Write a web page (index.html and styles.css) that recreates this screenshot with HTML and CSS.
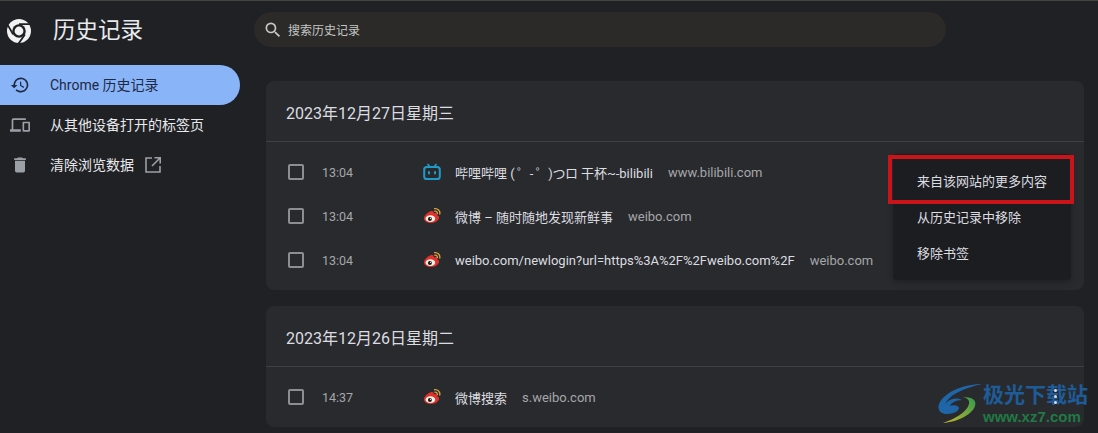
FILE: index.html
```html
<!DOCTYPE html>
<html lang="zh-CN">
<head>
    <meta charset="UTF-8">
    <meta name="viewport" content="width=device-width, initial-scale=1.0">
    <title>历史记录</title>
    <link rel="stylesheet" href="styles.css">
</head>
<body>
    <svg class="defs" width="0" height="0">
        <defs>
            <symbol id="weibo" viewBox="0 0 18 18">
                <path d="M1 11.4c0-3 4.2-6.6 7.2-7.4 2-.5 3 .6 2.5 2.4 2.4-.9 4-.3 3.4 1.8 1.2.5 2 1.2 2 2.4 0 2.6-3.6 5.4-8 5.4-4 0-7.1-1.9-7.1-4.6z" fill="#e0322b"/>
                <ellipse cx="7.4" cy="11.7" rx="4.8" ry="3.4" fill="#f6f1e8"/>
                <circle cx="6.9" cy="12" r="2" fill="#1d1310"/>
                <circle cx="7.5" cy="11.3" r=".6" fill="#f6f1e8"/>
                <path d="M11.6 1.6a4.6 4.6 0 0 1 5.2 5.4M11.8 4.2a2.2 2.2 0 0 1 2.6 2.5" fill="none" stroke="#d9a441" stroke-width="1.3" stroke-linecap="round"/>
            </symbol>
        </defs>
    </svg>

    <div class="app">
        <aside class="sidebar">
            <div class="brand">
                <svg class="brand-logo" width="26" height="26" viewBox="0 0 26 26">
                    <circle cx="13" cy="13" r="12" fill="#f1f1f1"/>
                    <circle cx="13" cy="13" r="6.8" fill="#202124"/>
                    <circle cx="13" cy="13" r="4.4" fill="#f1f1f1"/>
                    <path d="M13 6.2H24.6M7.1 16.4L1.4 6.4M18.9 16.4L12.6 25.6" stroke="#202124" stroke-width="1.8" fill="none"/>
                </svg>
                <span class="brand-title">历史记录</span>
            </div>
            <nav class="nav">
                <a class="nav-item active">
                    <svg class="nav-icon" width="20" height="20" viewBox="0 0 24 24"><path fill="#1d2a44" d="M13 3a9 9 0 0 0-9 9H1l3.9 3.9.1.1L9 12H6a7 7 0 1 1 2.05 4.95l-1.42 1.42A9 9 0 1 0 13 3zm-1 5v5l4.25 2.52.77-1.28-3.52-2.09V8H12z"/></svg>
                    <span>Chrome 历史记录</span>
                </a>
                <a class="nav-item">
                    <svg class="nav-icon" width="20" height="20" viewBox="0 0 24 24"><path fill="#9aa0a6" d="M4 6h15V4H4a2 2 0 0 0-2 2v11H0v3h13v-3H4V6zm19 2h-7a1 1 0 0 0-1 1v10a1 1 0 0 0 1 1h7a1 1 0 0 0 1-1V9a1 1 0 0 0-1-1zm-1 10h-5v-8h5v8z"/></svg>
                    <span>从其他设备打开的标签页</span>
                </a>
                <a class="nav-item">
                    <svg class="nav-icon" width="20" height="20" viewBox="0 0 24 24"><path fill="#9aa0a6" d="M6 19a2 2 0 0 0 2 2h8a2 2 0 0 0 2-2V7H6v12zM19 4h-3.5l-1-1h-5l-1 1H5v2h14V4z"/></svg>
                    <span>清除浏览数据</span>
                    <svg class="nav-external" width="18" height="18" viewBox="0 0 18 18"><path fill="none" stroke="#9aa0a6" stroke-width="1.6" d="M8 2H2v14h14v-6M10.5 1.8h5.7v5.7M16 2L8 10"/></svg>
                </a>
            </nav>
        </aside>

        <main class="main">
            <div class="search">
                <svg width="20" height="20" viewBox="0 0 24 24"><path fill="#c4c7c5" d="M15.5 14h-.79l-.28-.27A6.47 6.47 0 0 0 16 9.5 6.5 6.5 0 1 0 9.5 16c1.61 0 3.09-.59 4.23-1.57l.27.28v.79l5 4.99L20.49 19l-4.99-5zm-6 0C7.01 14 5 11.99 5 9.5S7.01 5 9.5 5 14 7.01 14 9.5 11.99 14 9.5 14z"/></svg>
                <span>搜索历史记录</span>
            </div>

            <section class="card">
                <h2 class="card-date">2023年12月27日星期三</h2>
                <div class="rows">
                    <div class="row">
                        <span class="check"></span>
                        <span class="time">13:04</span>
                        <svg class="favicon" width="18" height="18" viewBox="0 0 18 18">
                            <path fill="none" stroke="#1f9bc9" stroke-width="1.7" stroke-linecap="round" d="M5 1.5L7 4M13 1.5L11 4"/>
                            <rect x="1.2" y="4" width="15.6" height="12" rx="2.6" fill="none" stroke="#1f9bc9" stroke-width="2"/>
                            <path fill="none" stroke="#1f9bc9" stroke-width="2" stroke-linecap="round" d="M6 9v1.4M12 9v1.4"/>
                        </svg>
                        <span class="page-title">哔哩哔哩 <span class="kaomoji">( ゜- ゜)つロ</span> 干杯~-bilibili</span>
                        <span class="domain">www.bilibili.com</span>
                    </div>
                    <div class="row">
                        <span class="check"></span>
                        <span class="time">13:04</span>
                        <svg class="favicon" width="18" height="18"><use href="#weibo"/></svg>
                        <span class="page-title">微博 – 随时随地发现新鲜事</span>
                        <span class="domain">weibo.com</span>
                    </div>
                    <div class="row">
                        <span class="check"></span>
                        <span class="time">13:04</span>
                        <svg class="favicon" width="18" height="18"><use href="#weibo"/></svg>
                        <span class="page-title">weibo.com/newlogin?url=https%3A%2F%2Fweibo.com%2F</span>
                        <span class="domain">weibo.com</span>
                    </div>
                </div>
                <div class="menu">
                    <div class="menu-item">来自该网站的更多内容</div>
                    <div class="menu-item">从历史记录中移除</div>
                    <div class="menu-item">移除书签</div>
                </div>
                <div class="highlight"></div>
            </section>

            <section class="card">
                <h2 class="card-date">2023年12月26日星期二</h2>
                <div class="rows">
                    <div class="row">
                        <span class="check"></span>
                        <span class="time">14:37</span>
                        <svg class="favicon" width="18" height="18"><use href="#weibo"/></svg>
                        <span class="page-title">微博搜索</span>
                        <span class="domain">s.weibo.com</span>
                        <span class="dots"><i></i><i></i><i></i></span>
                    </div>
                </div>
            </section>
        </main>
    </div>

    <div class="watermark">
        <svg width="46" height="42" viewBox="0 0 46 42">
            <defs>
                <linearGradient id="wm-green" x1="0" y1="1" x2="1" y2="0">
                    <stop offset="0" stop-color="#c8b62c"/>
                    <stop offset="1" stop-color="#2f9a4c"/>
                </linearGradient>
            </defs>
            <path d="M45 1C30 1 10 7 3 19c-4 7 0 12 7 12 6 0 12-3 12-6 0-2-5-4-9-2 1-3 6-6 12-6-6-3-14-1-17 5C12 11 28 5 45 1z" fill="#1f66a8"/>
            <path d="M6 40c14-1 29-8 32-17 2-6-3-9-12-9 4 1 7 3 6 7-2 8-14 15-26 19z" fill="url(#wm-green)"/>
        </svg>
        <div class="watermark-text">
            <span class="watermark-name">极光下载站</span>
            <span class="watermark-url">www.xz7.com</span>
        </div>
    </div>
</body>
</html>
```

FILE: styles.css
```css
* {
    box-sizing: border-box;
}
body {
    margin: 0;
    height: 433px;
    overflow: hidden;
    position: relative;
    background: #202124;
    border-top: 1px solid #45453f;
    color: #e3e3e3;
    font-family: Roboto, "Noto Sans CJK SC", sans-serif;
}
.defs {
    position: absolute;
}
.app {
    display: flex;
}
.sidebar {
    width: 240px;
    flex-shrink: 0;
}
.brand {
    display: flex;
    align-items: center;
    height: 64px;
    padding: 0 0 5px 6px;
}
.brand-logo {
    margin-right: 21px;
}
.brand-title {
    font-size: 22.5px;
    line-height: 26px;
    margin-bottom: 1px;
    color: #e8eaed;
}
.nav-item {
    display: flex;
    align-items: center;
    height: 40px;
    padding: 0 0 1px 10px;
    font-size: 14px;
    line-height: 18px;
    color: #e8eaed;
}
.nav-item.active {
    background: #8ab4f8;
    color: #1d2a44;
    border-radius: 0 20px 20px 0;
}
.nav-icon {
    margin-right: 20px;
}
.nav-external {
    margin-left: 10px;
}
.main {
    flex: 1;
    min-width: 0;
}
.search {
    display: flex;
    align-items: center;
    gap: 5px;
    width: 692px;
    height: 35px;
    margin: 11px 0 34px 14px;
    padding-left: 9px;
    background: #2b2a28;
    border-radius: 18px;
    font-size: 12px;
    color: #c4c7c5;
}
.card {
    position: relative;
    width: 818px;
    margin: 0 0 16px 26px;
    background: #292a2d;
    border-radius: 8px;
}
.card-date {
    height: 61px;
    margin: 0;
    padding-left: 20px;
    border-bottom: 1px solid #3f4043;
    font-size: 16px;
    font-weight: 400;
    line-height: 66px;
    color: #dcdde0;
}
.rows {
    padding: 8px 0;
}
.row {
    display: flex;
    align-items: center;
    position: relative;
    height: 44px;
    padding-left: 22px;
    font-size: 13px;
}
.check {
    width: 16px;
    height: 16px;
    border: 2px solid #8d8e90;
    border-radius: 2px;
    flex-shrink: 0;
}
.time {
    width: 101px;
    margin-left: 18px;
    font-size: 12.5px;
    color: #a5a7aa;
}
.favicon {
    width: 18px;
    margin-right: 14px;
    flex-shrink: 0;
}
.page-title {
    color: #dcdde0;
    white-space: nowrap;
}
.kaomoji {
    letter-spacing: -0.4px;
}
.domain {
    margin-left: 15px;
    color: #a5a7aa;
    white-space: nowrap;
}
.dots {
    position: absolute;
    z-index: 2;
    right: 27px;
    top: 14px;
    display: flex;
    flex-direction: column;
    gap: 3px;
}
.dots i {
    display: block;
    width: 3px;
    height: 3px;
    border-radius: 50%;
    background: #dcdde0;
}
.menu {
    position: absolute;
    left: 627px;
    top: 73px;
    width: 178px;
    padding: 10px 0 8px;
    background: #1c1d20;
    border-radius: 4px;
    box-shadow: 0 2px 6px rgba(0, 0, 0, 0.25);
}
.menu-item {
    height: 36px;
    padding-left: 24px;
    font-size: 13px;
    line-height: 36px;
    color: #dcdde0;
}
.highlight {
    position: absolute;
    left: 622px;
    top: 74px;
    width: 186px;
    height: 49px;
    border: 4px solid #c9141a;
}
.watermark {
    position: absolute;
    z-index: 1;
    left: 937px;
    top: 381px;
    display: flex;
    align-items: center;
}
.watermark-text {
    display: flex;
    flex-direction: column;
}
.watermark-name {
    font-size: 21px;
    font-weight: 700;
    line-height: 26px;
    color: #1d5c99;
}
.watermark-url {
    font-family: "Liberation Sans", sans-serif;
    font-size: 15px;
    font-weight: 700;
    line-height: 18px;
    color: #1f7a45;
}
```
